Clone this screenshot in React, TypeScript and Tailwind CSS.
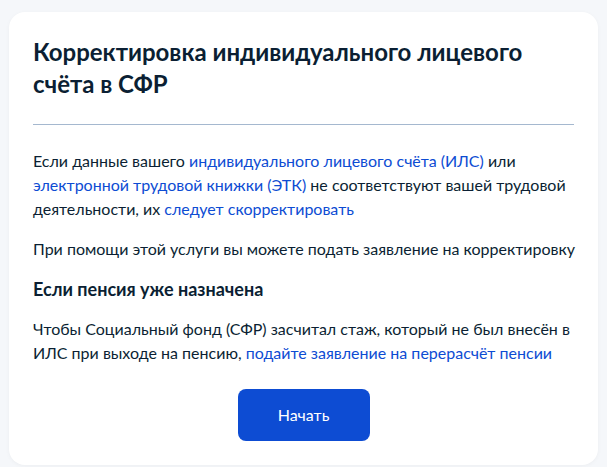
export default function App() {
  const link = "text-[#0d4cd3]";
  return (
    <div className="min-h-screen bg-[#f5f7fa] px-[9px] pt-[12px] pb-[4px] font-['Lato',sans-serif] text-[#0b1f33]">
      <div className="rounded-2xl bg-white px-6 pt-6 pb-6 shadow-[0_1px_4px_rgba(0,0,0,0.04)]">
        <h1 className="text-[24px] font-bold leading-[32px]">
          Корректировка индивидуального лицевого
          <br />
          счёта в СФР
        </h1>
        <div className="mt-6 h-px bg-[#a5b8cf]" />
        <p className="mt-6 text-[16px] leading-[24px]">
          Если данные вашего{" "}
          <a className={link}>индивидуального лицевого счёта (ИЛС)</a> или{" "}
          <a className={link}>электронной трудовой книжки (ЭТК)</a> не соответствуют вашей трудовой
          деятельности, их <a className={link}>следует скорректировать</a>
        </p>
        <p className="mt-4 whitespace-nowrap text-[16px] leading-[24px]">
          При помощи этой услуги вы можете подать заявление на корректировку
        </p>
        <h2 className="mt-4 text-[18px] font-bold leading-[24px]">Если пенсия уже назначена</h2>
        <p className="mt-4 text-[16px] leading-[24px]">
          Чтобы Социальный фонд (СФР) засчитал стаж, который не был внесён в ИЛС при выходе на
          пенсию, <a className={link}>подайте заявление на перерасчёт пенсии</a>
        </p>
        <div className="mt-6 flex justify-center">
          <button className="h-[52px] w-[132px] rounded-lg bg-[#0d4cd3] text-[16px] text-white">
            Начать
          </button>
        </div>
      </div>
    </div>
  );
}
